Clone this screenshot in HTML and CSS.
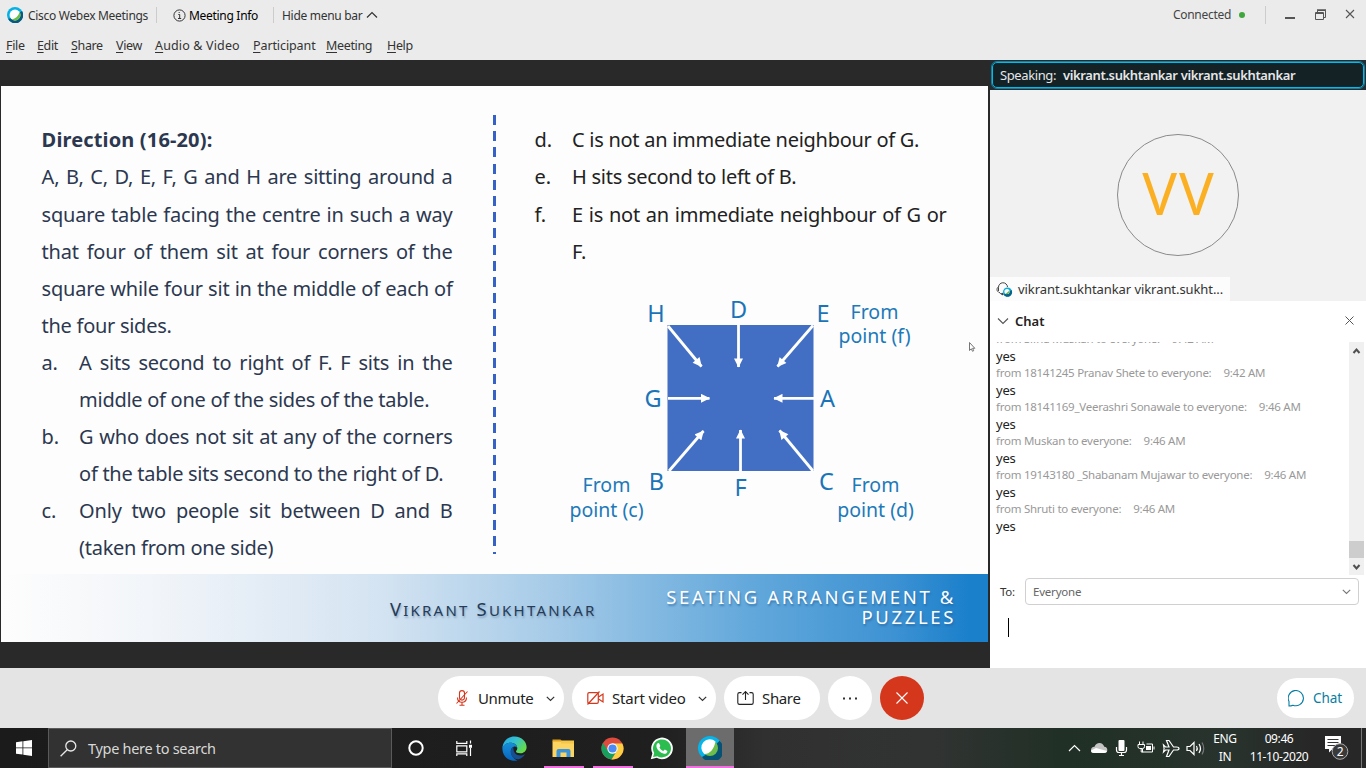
FILE: index.html
```html
<!DOCTYPE html>
<html lang="en">
<head>
<meta charset="utf-8">
<title>Cisco Webex Meetings</title>
<link rel="stylesheet" href="styles.css">
</head>
<body>
<header class="top">
  <div class="titlebar">
    <svg class="logo" width="16" height="16" viewBox="0 0 24 24"><circle cx="12" cy="12" r="12" fill="#04b1e4"/><path d="M22.500 6A12 12 0 1 1 1.500 17.500Q7 18 12 14Z" fill="#075a7d"/><circle cx="12" cy="12" r="8.200" fill="#fff"/><path d="M18.800 7.500A8.200 8.200 0 0 1 7 18.500C13 18 17.500 13 18.800 7.500Z" fill="#6cbe4a"/></svg>
    <span class="app-name">Cisco Webex Meetings</span>
    <i class="sep"></i>
    <svg class="info" width="13" height="13" viewBox="0 0 13 13" fill="none" stroke="#333"><circle cx="6.500" cy="6.500" r="5.600"/><path d="M5.300 5.500h1.400v4M5 9.500h3.200M6.200 3v1"/></svg>
    <span class="meet-info">Meeting Info</span>
    <i class="sep sep-two"></i>
    <span class="hide-menu">Hide menu bar</span>
    <svg class="up" width="12" height="8" viewBox="0 0 12 8" fill="none" stroke="#333" stroke-width="1.200"><path d="M1 6.500 6 1.500l5 5"/></svg>
    <span class="connected">Connected</span>
    <i class="dot"></i>
    <i class="sep sep-three"></i>
    <svg class="win" width="76" height="14" viewBox="0 0 76 14" fill="none" stroke="#555"><path d="M0 10h10" stroke-width="2"/><path d="M30.500 4.500h8v7h-8zM30 5.500h9M32.500 4V2.500h8v7h-2" /><path d="M32 2h9" stroke-width="1.500"/><path d="m61 2 8 8m0-8-8 8" stroke-width="1.100"/></svg>
  </div>
  <nav class="menu"><span class="m1"><u>F</u>ile</span><span class="m2"><u>E</u>dit</span><span class="m3"><u>S</u>hare</span><span class="m4"><u>V</u>iew</span><span class="m5"><u>A</u>udio &amp; Video</span><span class="m6"><u>P</u>articipant</span><span class="m7"><u>M</u>eeting</span><span class="m8"><u>H</u>elp</span></nav>
</header>
<main class="stage">
  <section class="share">
    <div class="slide">
      <div class="content">
        <div class="col-left">
          <p class="heading">Direction (16-20):</p>
          <p class="line">A, B, C, D, E, F, G and H are sitting around a</p>
          <p class="line">square table facing the centre in such a way</p>
          <p class="line">that four of them sit at four corners of the</p>
          <p class="line">square while four sit in the middle of each of</p>
          <p class="line end">the four sides.</p>
          <div class="item"><b>a.</b><div><p class="line">A sits second to right of F. F sits in the</p><p class="line end">middle of one of the sides of the table.</p></div></div>
          <div class="item"><b>b.</b><div><p class="line">G who does not sit at any of the corners</p><p class="line end">of the table sits second to the right of D.</p></div></div>
          <div class="item"><b>c.</b><div><p class="line">Only two people sit between D and B</p><p class="line end">(taken from one side)</p></div></div>
        </div>
        <div class="divider"></div>
        <div class="col-right">
          <div class="item"><b>d.</b><div><p class="line end">C is not an immediate neighbour of G.</p></div></div>
          <div class="item"><b>e.</b><div><p class="line end">H sits second to left of B.</p></div></div>
          <div class="item"><b>f.</b><div><p class="line">E is not an immediate neighbour of G or</p><p class="line end">F.</p></div></div>
          <svg class="diagram" width="460" height="240" viewBox="520 290 460 240">
            <defs><marker id="tip" viewBox="0 0 9 9" refX="8.500" refY="4.500" markerWidth="10" markerHeight="9" markerUnits="userSpaceOnUse" orient="auto"><path d="M0 0 9 4.500 0 9z" fill="#fff"/></marker></defs>
            <path d="M667.500 325h146v146h-146z" fill="#426fc4"/>
            <g stroke="#fff" stroke-width="2.800">
              <path d="M668 326 701.500 366.500" marker-end="url(#tip)"/><path d="M738.500 325V367" marker-end="url(#tip)"/><path d="M813 325.500 777.500 366.500" marker-end="url(#tip)"/>
              <path d="M668 398.300H709.500" marker-end="url(#tip)"/><path d="M814 398.300H774" marker-end="url(#tip)"/>
              <path d="M669 471 703.500 431" marker-end="url(#tip)"/><path d="M740.500 471V430" marker-end="url(#tip)"/><path d="M813 471 779.500 430.500" marker-end="url(#tip)"/>
            </g>
            <g class="seat"><text x="656" y="322">H</text><text x="738.500" y="318">D</text><text x="823" y="322">E</text><text x="653" y="407">G</text><text x="827.500" y="407">A</text><text x="656.500" y="489.500">B</text><text x="740.500" y="496">F</text><text x="826.500" y="490">C</text></g>
            <g class="note"><text x="874.500" y="318.500">From</text><text x="874.500" y="343">point (f)</text><text x="606.500" y="492">From</text><text x="606.500" y="516.500">point (c)</text><text x="875.500" y="492">From</text><text x="875.500" y="516.500">point (d)</text></g>
            <path d="M969.500 342.500v8l1.800-1.700 1.200 2.500 1.200-.6-1.100-2.400h2.200z" fill="#fff" stroke="#666" stroke-width=".9"/>
          </svg>
        </div>
      </div>
      <footer class="slide-foot"><span class="presenter">V<small>IKRANT</small> S<small>UKHTANKAR</small></span><span class="topic">SEATING ARRANGEMENT &amp;<br>PUZZLES</span></footer>
    </div>
  </section>
  <aside class="panel">
    <div class="speaking"><div class="speaking-in"><span class="sp-label">Speaking:</span><strong>vikrant.sukhtankar vikrant.sukhtankar</strong></div></div>
    <div class="video">
      <div class="avatar"><span>VV</span></div>
      <div class="nametag"><svg width="17" height="15" viewBox="0 0 17 15"><path d="M2.500 9V5.500a4.500 4.500 0 0 1 9-.5M2.500 5C.5 5.500.5 9.500 2.500 10M3 10q1 2 3 2" fill="none" stroke="#444"/><circle cx="6.500" cy="12" r="1.200" fill="#444"/><circle cx="11.500" cy="10" r="4.500" fill="#0aaed8"/><path d="M15.500 8a4.500 4.500 0 0 1-8 4.500l3.500-1z" fill="#086289"/><circle cx="11" cy="9.500" r="2.600" fill="#fff"/><path d="M13.500 8.500a3 3 0 0 1-4 3.500z" fill="#65b547"/></svg><span>vikrant.sukhtankar vikrant.sukht...</span></div>
    </div>
    <div class="chat-head"><svg width="12" height="8" viewBox="0 0 12 8" fill="none" stroke="#555" stroke-width="1.100"><path d="m1 1.500 5 5 5-5"/></svg><strong>Chat</strong><svg class="x" width="9" height="9" viewBox="0 0 9 9" stroke="#555"><path d="m.5.5 8 8m0-8-8 8"/></svg></div>
    <div class="chat-body">
      <div class="messages">
        <p class="from cut">from Sifna Muskan to everyone:<time>9:42 AM</time></p><p class="msg">yes</p>
        <p class="from">from 18141245 Pranav Shete to everyone:<time>9:42 AM</time></p><p class="msg">yes</p>
        <p class="from">from 18141169_Veerashri Sonawale to everyone:<time>9:46 AM</time></p><p class="msg">yes</p>
        <p class="from">from Muskan to everyone:<time>9:46 AM</time></p><p class="msg">yes</p>
        <p class="from">from 19143180 _Shabanam Mujawar to everyone:<time>9:46 AM</time></p><p class="msg">yes</p>
        <p class="from">from Shruti to everyone:<time>9:46 AM</time></p><p class="msg">yes</p>
      </div>
      <div class="scroll"><svg width="15" height="17" viewBox="0 0 15 17" fill="none" stroke="#505050" stroke-width="2"><path d="m4.500 11 3-3.500 3 3.500"/></svg><i class="thumb"></i><svg width="15" height="17" viewBox="0 0 15 17" fill="none" stroke="#505050" stroke-width="2"><path d="m4.500 7 3 3.500 3-3.500"/></svg></div>
    </div>
    <div class="to-row"><span>To:</span><div class="select"><span>Everyone</span><svg width="9" height="6" viewBox="0 0 9 6" fill="none" stroke="#777" stroke-width="1.100"><path d="m.8.800 3.700 3.700L8.200.8"/></svg></div></div>
    <div class="compose"><i></i></div>
  </aside>
</main>
<div class="controls">
  <div class="buttons">
    <div class="pill unmute"><svg width="12" height="16" viewBox="0 0 12 16" fill="none" stroke="#d4371c" stroke-width="1.100"><rect x="3.500" y=".6" width="5" height="9.500" rx="2.500"/><path d="M1.500 7.500q0 4.700 4.500 4.700t4.500-4.700M6 12.500v2.500M3.500 15.200h5M11.500 1.500.5 13.500"/></svg><span>Unmute</span><svg class="chev" width="9" height="6" viewBox="0 0 9 6" fill="none" stroke="#333" stroke-width="1.200"><path d="m.8.800 3.700 3.700L8.200.8"/></svg></div>
    <div class="pill video-btn"><svg width="17" height="14" viewBox="0 0 17 14" fill="none" stroke="#d4371c" stroke-width="1.200"><rect x=".8" y="1.600" width="10.500" height="10.800" rx="1.300"/><path d="M11.500 6 16 3v8l-4.500-3M.5 13.500 12.500.5"/></svg><span>Start video</span><svg class="chev" width="9" height="6" viewBox="0 0 9 6" fill="none" stroke="#333" stroke-width="1.200"><path d="m.8.800 3.700 3.700L8.200.8"/></svg></div>
    <div class="pill share-btn"><svg width="17" height="14" viewBox="0 0 17 14" fill="none" stroke="#222" stroke-width="1.100"><path d="M4.500 1.600h-2Q.8 1.600.8 3.300v8.400q0 1.700 1.700 1.700h12q1.700 0 1.700-1.700V3.300q0-1.700-1.700-1.700h-2M8.500 9V.8M5.500 3.600l3-3 3 3"/></svg><span>Share</span></div>
    <div class="round"><svg width="16" height="3"><path d="M1 .5h2v2H1zm6 0h2v2H7zm6 0h2v2h-2z" fill="#333"/></svg></div>
    <div class="round leave"><svg width="12" height="12" viewBox="0 0 12 12" stroke="#fff" stroke-width="1.100"><path d="m.5.500 11 11m0-11-11 11"/></svg></div>
  </div>
  <div class="chat-btn"><svg width="17" height="17" viewBox="0 0 17 17" fill="none" stroke="#087da3" stroke-width="1.100"><path d="M1 16v-4.500A7.600 7.600 0 1 1 5 15.200Q3 16 1 16z"/></svg><span>Chat</span></div>
</div>
<div class="taskbar">
  <div class="start"><svg width="16" height="16" viewBox="0 0 16 16" fill="#fff"><path d="M0 2.200 6.500 1.300v6.200H0zM7.300 1.200 16 0v7.500H7.300zM0 8.300h6.500v6.300L0 13.800zM7.300 8.300H16V16l-8.700-1.200z"/></svg></div>
  <div class="search"><svg width="17" height="17" viewBox="0 0 17 17" fill="none" stroke="#e8e8e8" stroke-width="1.300"><circle cx="10.800" cy="6" r="5"/><path d="M7.200 9.700.6 16.300"/></svg><span>Type here to search</span></div>
  <div class="apps">
    <div class="app cortana"><svg width="16" height="16"><circle cx="8" cy="8" r="6.700" fill="none" stroke="#fff" stroke-width="2"/></svg></div>
    <div class="app views"><svg width="17" height="17" viewBox="0 0 17 17" fill="none" stroke="#fff" stroke-width="1.200"><path d="M.8 1v2.400h10V1M.8 5.800h10v6H.8zM.8 16v-2.200h10V16M14.500.5v3M14.500 8v8"/><path d="M13 4.800h3v3h-3z" fill="#fff" stroke="none"/></svg></div>
    <div class="app"><svg width="25" height="25" viewBox="0 0 25 25"><defs><linearGradient id="eg" x1="0" y1="0" x2="1" y2=".6"><stop offset="0" stop-color="#22a7ea"/><stop offset=".5" stop-color="#35c1d0"/><stop offset="1" stop-color="#65dc48"/></linearGradient><linearGradient id="eb" x1="0" y1="0" x2="0" y2="1"><stop offset="0" stop-color="#1690da"/><stop offset="1" stop-color="#0865bd"/></linearGradient></defs><path d="M.4 12C1 5 6 .4 12.500.4 20 .4 24.600 6 24.600 11c0 4-3 6.300-6.300 6.300-2.800 0-4.300-.8-4.300-1.700 0-.8 1.300-1.400 1.300-3.300C15.300 9 12 6.800 8.500 6.800 4.500 6.800 2 9 .4 12z" fill="url(#eg)"/><path d="M.4 12.200C1.400 8.500 5 6.500 8.800 6.700c3.500.2 6.200 2.500 6.400 5-1-.8-2.200-1.300-3.500-1-3 1-3.700 5.600-1.700 9 1.500 2.700 4 4.500 5.500 4.700C7 26 .4 20.500.4 12.200z" fill="url(#eb)"/><path d="M11.500 10.800C8 13 8 17 10 20c2.200 3.500 7 4.500 10 1.500 1.500-1 2.500-2.200 3-3.200-4 2-7.600 1.400-9.500-.5-1.800-2-2.500-4.700-2-7z" fill="#174f91"/></svg></div>
    <div class="app open"><svg width="23" height="19" viewBox="0 0 23 19"><path d="M.5.5h8l2 2.500H.5z" fill="#e2a21b"/><path d="M.5 2.500H22V18H.5z" fill="#fcd462"/><path d="M9 1.500h13v3H9z" fill="#f6c745"/><path d="M4.500 18v-6q0-2 2-2h10q2 0 2 2v6h-4v-4.500h-6V18z" fill="#3b94d9"/></svg></div>
    <div class="app open"><svg width="23" height="23" viewBox="0 0 24 24"><circle cx="12" cy="12" r="11.500" fill="#dd4b3e"/><path d="M2 6.200A11.500 11.500 0 0 0 11 23.400L16.500 14.500 7.500 14.500z" fill="#17a05d"/><path d="M12 6.700h10.200A11.500 11.500 0 0 1 11 23.400l5.500-8.800z" fill="#fcce42"/><circle cx="12" cy="12" r="5.400" fill="#fff"/><circle cx="12" cy="12" r="4.300" fill="#4c8bf5"/></svg></div>
    <div class="app"><svg width="23" height="23" viewBox="0 0 24 24"><path d="M.8 23.300 2.500 17A11.300 11.300 0 1 1 7 21.700z" fill="#fff"/><path d="m3.200 20.900 1.200-4.200A9.400 9.400 0 1 1 7.700 20z" fill="#2bbd4f"/><path d="M8 6.500c1-.5 1.500-.2 2 1l.7 1.600c.2.600-.8 1.400-.8 1.800 1 1.900 2.300 2.900 4 3.600.6 0 1.200-1.600 1.900-1.300l2.400 1.300c0 2.300-1.900 3-3.500 2.900-4-.5-8-4.500-8-7.900 0-1.500.6-2.600 1.300-3z" fill="#fff"/></svg></div>
    <div class="app active"><svg width="24" height="24" viewBox="0 0 24 24"><circle cx="12" cy="12" r="12" fill="#07b5e8"/><path d="M21.500 4.800A12 12 0 1 1 4 21L9 18z" fill="#075274"/><circle cx="12" cy="12" r="8" fill="#6cbd4a"/><path d="M17.500 5.400C16 13 12 18 6.200 18A8.300 8.300 0 0 1 17.500 5.400z" fill="#fff"/></svg></div>
  </div>
  <div class="tray">
    <svg class="icons" width="138" height="20" viewBox="0 0 138 20" fill="none" stroke="#fff" stroke-width="1.200"><path d="m1 13 5.500-5.500L12 13"/><path d="M26 15q-3-.2-3-3 0-3 3.500-3.300Q28 5 31.500 5q3.500 0 4.800 3.800 3 .2 3 3.300 0 2.900-3 2.900z" fill="#c4c4c4" stroke="none"/><path d="m23 12.500 5-2.500 11 3q-.5 2-3 2H26q-3 0-3-2.500z" fill="#fff" stroke="none"/><rect x="50.500" y="2" width="6" height="11" rx="1" fill="#fff" stroke="none"/><path d="M48.500 9v3q0 2.500 2.500 2.500h5q2.500 0 2.500-2.500V9M53.500 14v3M51 17.500h5"/><path d="M78.500 6h6v8H74.500v-3M86 8.500v3M71.500 3.500V6M75 3.500V6M70 6.500h6.500v2q0 2-1.800 2h-2.900q-1.800 0-1.800-2zM73.200 10.500v3.500h2" stroke-width="1"/><path d="M78 8h5v4h-5z" fill="#fff" stroke="none"/><path d="m95.500 7 2 2h3.500L98.500 2.500h2.500l4.500 6.500h3q2.500 0 2.500 1.500T108.500 12h-3l-4.500 6.500h-2.500l2.500-6.500h-3.500l-2 2 .6-3.500z"/><path d="M119 8.500h3l4-4v12l-4-4h-3z"/><path d="M128.500 8q1.500 2.500 0 5M131 6q3 4.500 0 9"/><path d="M134 4.500q3.500 6 0 12" stroke="#777"/></svg>
    <div class="lang">ENG<br>IN</div>
    <div class="clock">09:46<br>11-10-2020</div>
    <svg class="notify" width="25" height="25" viewBox="0 0 25 25"><path d="M1 0h16v13H8.500L5 16.500V13H1z" fill="#fff"/><path d="M3.500 3.500h11M3.500 6.500h11M3.500 9.500h8" stroke="#333"/><circle cx="16" cy="15.500" r="7.800" fill="#3a3a3a" stroke="#aaa"/><text x="16" y="20">2</text></svg>
    <i class="desk"></i>
  </div>
</div>
</body>
</html>
```
FILE: styles.css
```css
* { box-sizing: border-box; }
body { margin: 0; width: 1366px; height: 768px; overflow: hidden; font-family: "Noto Sans", "Open Sans", sans-serif; font-size: 12px; color: #333; background: #ebebeb; }
p { margin: 0; }
svg { display: block; flex: none; }
span, strong { white-space: nowrap; }

.top { height: 60px; background: #ebebeb; }
.titlebar { display: flex; align-items: center; height: 30px; padding-left: 7px; letter-spacing: -.3px; }
.app-name { width: 120px; margin-left: 5px; }
.sep { width: 1px; height: 16px; margin-left: 8px; background: #ccc; }
.info { margin-left: 16px; }
.meet-info { width: 69px; margin-left: 3px; color: #000; }
.sep-two { margin-left: 15px; }
.hide-menu { width: 80px; margin-left: 8px; }
.up { margin-left: 4px; }
.connected { width: 58px; margin-left: auto; margin-top: -2px; color: #444; }
.dot { width: 6px; height: 6px; margin-left: 8px; border-radius: 50%; background: #3fa63c; }
.sep-three { height: 18px; margin-left: 20px; }
.win { margin-left: 19px; margin-right: 5px; margin-top: -1px; }
.menu { display: flex; height: 30px; padding-left: 6px; font-size: 12.500px; line-height: 31px; letter-spacing: 0; }
.menu u { text-underline-offset: 2px; }
.m1, .m2, .m3, .m4, .m6, .m7, .m8 { letter-spacing: -.35px; }
.m1 { width: 31px; } .m2 { width: 34px; } .m3 { width: 45px; } .m4 { width: 39px; } .m5 { width: 98px; } .m6 { width: 73px; } .m7 { width: 61px; }
.menu .m5 { letter-spacing: .15px; }
.menu .m6 { letter-spacing: -.1px; }

.stage { display: flex; height: 608px; background: #292929; }
.share { width: 990px; padding: 26px 2px 26px 1px; }
.slide { display: flex; flex-direction: column; height: 556px; background: #fdfdfd; }
.content { display: flex; height: 488px; padding: 0 0 0 40.600px; font-size: 20px; line-height: 37.1px; letter-spacing: -.2px; }
.col-left { width: 411px; padding-top: 35.400px; color: #2c3850; }
.heading { height: 37.1px; font-weight: 700; letter-spacing: .15px; }
.line { height: 37.1px; white-space: nowrap; text-align: justify; text-align-last: justify; }
.line.end { text-align-last: left; letter-spacing: -.28px; }
.item { display: flex; }
.item b { width: 37.5px; font-weight: 400; }
.item > div { flex: 1; }
.divider { width: 3px; height: 439px; margin: 29px 0 0 40px; background: repeating-linear-gradient(#3562c4 0 10px, transparent 10px 16.200px); }
.col-right { width: 412px; margin-left: 39px; padding-top: 35.400px; color: #222; }
.diagram { margin: 20.600px 0 0 -14.600px; letter-spacing: 0; }
.seat { font-size: 23.500px; text-anchor: middle; fill: #1b74b8; }
.note { font-size: 19.500px; text-anchor: middle; fill: #2079b9; }
.slide-foot { display: flex; justify-content: flex-end; height: 68px; background: linear-gradient(90deg, #fdfdfd 0, #f2f5f9 15%, #d5e4f2 38%, #a8cce8 55%, #62a8db 76%, #3f93d3 90%, #1b80cb 98%); }
.presenter { width: 275px; padding-top: 21px; font-size: 18.500px; line-height: 27px; letter-spacing: 2.200px; color: #253b57; text-shadow: 1px 2px 2px #6d8ba899; }
.presenter small { font-size: 15px; }
.topic { width: 291px; margin-right: 32px; padding-top: 13px; font-size: 18.500px; line-height: 20px; letter-spacing: 2.650px; text-align: right; color: #fff; text-shadow: 1px 2px 2px #23619a99; }

.panel { display: flex; flex-direction: column; width: 376px; background: #fff; }
.speaking { height: 30px; padding: 2px; background: #1f2f35; }
.speaking-in { display: flex; align-items: center; height: 26px; padding-left: 7px; border: 1px solid #00bceb; outline: 1px solid #207894; border-radius: 5px; background: #142226; color: #e6e6e6; font-size: 13px; letter-spacing: -.4px; }
.speaking-in .sp-label { width: 63px; }
.speaking-in strong { font-weight: 600; letter-spacing: -.37px; }
.video { display: flex; flex-direction: column; align-items: center; height: 211px; padding-top: 44px; background: #f1f1f1; }
.avatar { display: flex; align-items: center; justify-content: center; width: 122px; height: 122px; padding-bottom: 4px; border: 1px solid #8a8a8a; border-radius: 50%; background: #f2f2f2; color: #fbb024; font-size: 58px; line-height: 1; }
.avatar span { letter-spacing: 2px; margin-right: -2px; }
.nametag { display: flex; align-items: center; align-self: flex-start; gap: 5px; width: 240px; height: 24px; margin-top: 21px; padding-left: 6px; background: #fcfcfc; font-size: 13px; letter-spacing: -.07px; }
.chat-head { display: flex; align-items: center; height: 41px; padding: 0 12px 2px 7px; color: #222; }
.chat-head strong { margin-left: 6px; font-weight: 600; font-size: 13px; }
.chat-head .x { margin-left: auto; }
.chat-body { display: flex; justify-content: space-between; height: 233px; padding-right: 2px; }
.messages { width: 359px; padding-left: 6px; overflow: hidden; }
.from { height: 17px; font-size: 11.500px; line-height: 16px; letter-spacing: -.26px; color: #999; }
.from.cut { line-height: 15px; margin-top: -11px; }
.from time { margin-left: 12px; }
.msg { height: 17px; font-size: 13px; line-height: 17px; letter-spacing: -.2px; color: #222; }
.scroll { display: flex; flex-direction: column; width: 15px; background: #f0f0f0; }
.thumb { height: 17px; margin-top: auto; background: #cdcdcd; }
.to-row { display: flex; align-items: center; height: 27px; margin-top: 3px; padding-left: 10px; font-size: 11.500px; letter-spacing: -.3px; }
.to-row > span { width: 25px; }
.select { display: flex; align-items: center; justify-content: space-between; width: 334px; height: 27px; padding: 0 7px; border: 1px solid #d0d0d0; border-radius: 4px; color: #666; letter-spacing: -.2px; }
.compose { padding: 13px 0 0 18px; }
.compose i { display: block; width: 1px; height: 19px; background: #000; }

.controls { display: flex; align-items: flex-start; justify-content: space-between; height: 60px; padding: 8px 12px 0 438px; background: #e4e4e4; color: #222; font-size: 15px; letter-spacing: -.35px; }
.buttons { display: flex; gap: 8px; }
.pill { display: flex; align-items: center; height: 44px; border-radius: 22px; background: #fff; }
.unmute { width: 126px; padding-left: 18px; }
.unmute span { width: 57px; margin-left: 10px; }
.video-btn { width: 144px; padding-left: 15px; }
.video-btn span { width: 75px; margin-left: 8px; letter-spacing: -.2px; }
.chev { margin: 1px 0 0 11px; }
.share-btn { width: 96px; padding-left: 13px; }
.share-btn span { margin-left: 8px; }
.round { display: flex; align-items: center; justify-content: center; width: 44px; height: 44px; border-radius: 50%; background: #fff; }
.leave { background: #d4371c; }
.chat-btn { display: flex; align-items: center; width: 77px; height: 40px; margin-top: 2px; padding-left: 11px; border-radius: 20px; background: #fff; color: #087da3; font-size: 13.500px; letter-spacing: -.1px; }
.chat-btn span { margin-left: 8px; }

.taskbar { display: flex; height: 40px; background: linear-gradient(90deg, #1b1b1b 0, #1f1f1f 48%, #303030 56%, #313332 68%, #203026 78%, #28332d 90%, #272727 96%); color: #fff; }
.start { display: flex; align-items: center; justify-content: center; width: 48px; }
.search { display: flex; align-items: center; gap: 11px; width: 344px; padding-left: 11px; border: 1px solid #5a5a5a; background: #323232; color: #d8d8d8; font-size: 14.500px; letter-spacing: -.3px; }
.apps { display: flex; }
.app { display: flex; align-items: center; justify-content: center; width: 49px; height: 40px; }
.app.cortana, .app.views { padding-right: 2px; }
.app.open { background: linear-gradient(#f070e0, #f070e0) center bottom / 40px 2px no-repeat; }
.app.active { width: 48px; background: linear-gradient(#f070e0, #f070e0) bottom / 100% 2px no-repeat #6c6c6c; }
.tray { display: flex; align-items: center; flex: 1; justify-content: flex-end; font-size: 12px; line-height: 18px; letter-spacing: -.4px; text-align: center; }
.icons { margin-right: 4px; }
.lang { width: 30px; }
.clock { width: 78px; }
.notify { margin-left: 6px; }
.notify text { font-size: 12px; text-anchor: middle; fill: #fff; }
.desk { align-self: stretch; width: 1px; margin: 0 4px 0 12px; background: #777; }
```
